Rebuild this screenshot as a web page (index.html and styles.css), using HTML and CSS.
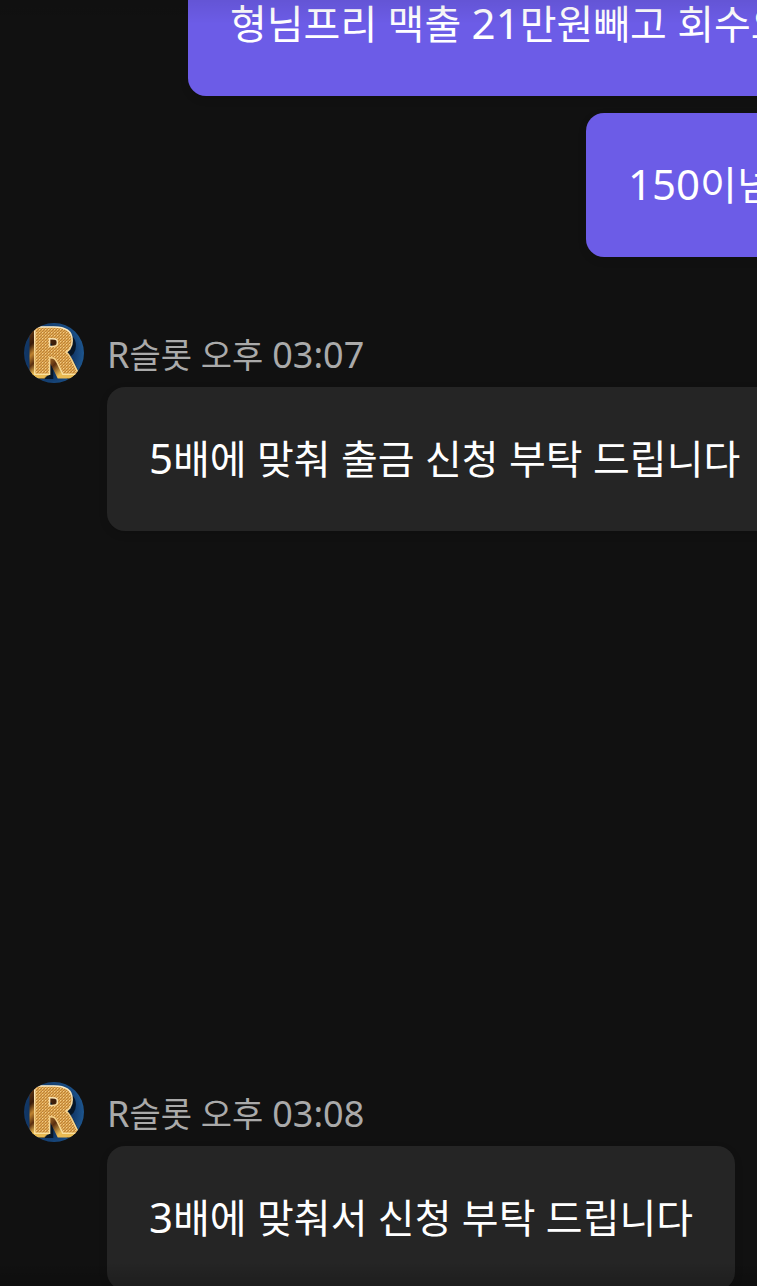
FILE: index.html
```html
<!DOCTYPE html>
<html lang="ko">
<head>
    <meta charset="UTF-8">
    <meta name="viewport" content="width=device-width, initial-scale=1.0">
    <title>R슬롯</title>
    <link rel="stylesheet" href="styles.css">
</head>
<body>

    <!-- shared avatar -->
    <svg class="defs" aria-hidden="true">
        <defs>
            <radialGradient id="avatar-bg" cx="0.4" cy="0.5" r="0.6">
                <stop offset="0" stop-color="#0a2340"/>
                <stop offset="0.7" stop-color="#12396a"/>
                <stop offset="1" stop-color="#1d568f"/>
            </radialGradient>
            <linearGradient id="gold-side" x1="0" y1="0" x2="0" y2="1">
                <stop offset="0" stop-color="#7a4617"/>
                <stop offset="0.35" stop-color="#3a1c0a"/>
                <stop offset="0.5" stop-color="#c08430"/>
                <stop offset="0.65" stop-color="#5a2e10"/>
                <stop offset="0.8" stop-color="#f0c257"/>
                <stop offset="1" stop-color="#8a5318"/>
            </linearGradient>
            <linearGradient id="gold-edge" x1="0" y1="0" x2="0" y2="1">
                <stop offset="0" stop-color="#fff6dc"/>
                <stop offset="0.6" stop-color="#f3cf86"/>
                <stop offset="1" stop-color="#ffeeb0"/>
            </linearGradient>
            <pattern id="gold-face" width="3" height="3" patternUnits="userSpaceOnUse">
                <rect width="3" height="3" fill="#dca650"/>
                <path d="M0 3L3 0" stroke="#bd8038" stroke-width="1"/>
                <rect width="1" height="1" fill="#f3cc84"/>
            </pattern>
            <clipPath id="avatar-clip"><circle cx="30" cy="30" r="30"/></clipPath>
            <symbol id="avatar" viewBox="0 0 60 60">
                <g clip-path="url(#avatar-clip)" class="logo">
                    <rect width="60" height="60" fill="url(#avatar-bg)"/>
                    <text x="11" y="55" fill="#071627" stroke="#071627" stroke-width="3">R</text>
                    <g fill="url(#gold-side)" stroke="url(#gold-side)" stroke-width="4">
                        <text x="2" y="54">R</text>
                        <text x="3" y="53">R</text>
                        <text x="4" y="52">R</text>
                        <text x="5" y="51">R</text>
                        <text x="6" y="51">R</text>
                    </g>
                    <text x="7" y="50" fill="url(#gold-edge)" stroke="url(#gold-edge)" stroke-width="5">R</text>
                    <text x="7" y="50" fill="url(#gold-face)" stroke="url(#gold-face)" stroke-width="2">R</text>
                </g>
            </symbol>
        </defs>
    </svg>

    <main class="chat">
        <div class="sent-group">
            <p class="bubble sent sent-long">형님프리 맥출 <span class="num">21</span>만원빼고 회수오</p>
            <p class="bubble sent sent-short"><span class="num">150</span>이넘</p>
        </div>

        <article class="message">
            <svg class="avatar" role="img" aria-label="R슬롯"><use href="#avatar"/></svg>
            <div class="message-body">
                <div class="meta"><span class="num">R</span>슬롯 오후 <time class="num">03:07</time></div>
                <p class="bubble received"><span class="num">5</span>배에 맞춰 출금 신청 부탁 드립니다</p>
            </div>
        </article>

        <article class="message">
            <svg class="avatar" role="img" aria-label="R슬롯"><use href="#avatar"/></svg>
            <div class="message-body">
                <div class="meta"><span class="num">R</span>슬롯 오후 <time class="num">03:08</time></div>
                <p class="bubble received"><span class="num">3</span>배에 맞춰서 신청 부탁 드립니다</p>
            </div>
        </article>
    </main>

</body>
</html>
```
FILE: styles.css
```css
* {
    box-sizing: border-box;
}
body {
    margin: 0;
    background: #111;
    color: #fff;
    font-family: "Noto Sans", "Noto Sans CJK KR", sans-serif;
}
.defs {
    position: absolute;
    width: 0;
    height: 0;
}
.chat {
    position: relative;
    display: flex;
    flex-direction: column;
    height: 100vh;
    overflow: hidden;
}
/* soft shade on the edges of the scroll area */
.chat::before,
.chat::after {
    content: "";
    position: absolute;
    left: 0;
    right: 0;
    height: 24px;
}
.chat::before {
    top: 0;
    background: linear-gradient(rgba(0, 0, 0, 0.08), transparent);
}
.chat::after {
    bottom: 0;
    background: linear-gradient(transparent, rgba(0, 0, 0, 0.2));
}
.bubble {
    width: max-content;
    margin: 0;
    padding: 42px;
    border-radius: 18px;
    font-size: 40px;
    line-height: 60px;
    white-space: nowrap;
    box-shadow: 0 3px 9px rgba(0, 0, 0, 0.12);
}
.bubble .num {
    font-size: 42px;
}
.sent-group {
    display: flex;
    flex-direction: column;
    flex-shrink: 0;
    gap: 17px;
    margin-top: -48px;
    margin-bottom: 66px;
}
.sent {
    min-width: 100%;
    background: #6c5ce7;
}
.sent-long {
    margin-left: 188px;
}
.sent-short {
    margin-left: 586px;
}
.message {
    display: flex;
    flex-shrink: 0;
    gap: 23px;
    padding-left: 24px;
    margin-bottom: 551px;
}
.message:last-child {
    margin-bottom: 0;
}
.avatar {
    flex-shrink: 0;
    width: 60px;
    height: 60px;
}
.logo {
    font-family: "DejaVu Sans", sans-serif;
    font-size: 60px;
    font-weight: bold;
}
.meta {
    color: #aaa;
    font-size: 34px;
    line-height: 64px;
}
.meta .num {
    font-size: 36px;
}
.num {
    line-height: 1;
}
.received {
    background: #252525;
}
```
